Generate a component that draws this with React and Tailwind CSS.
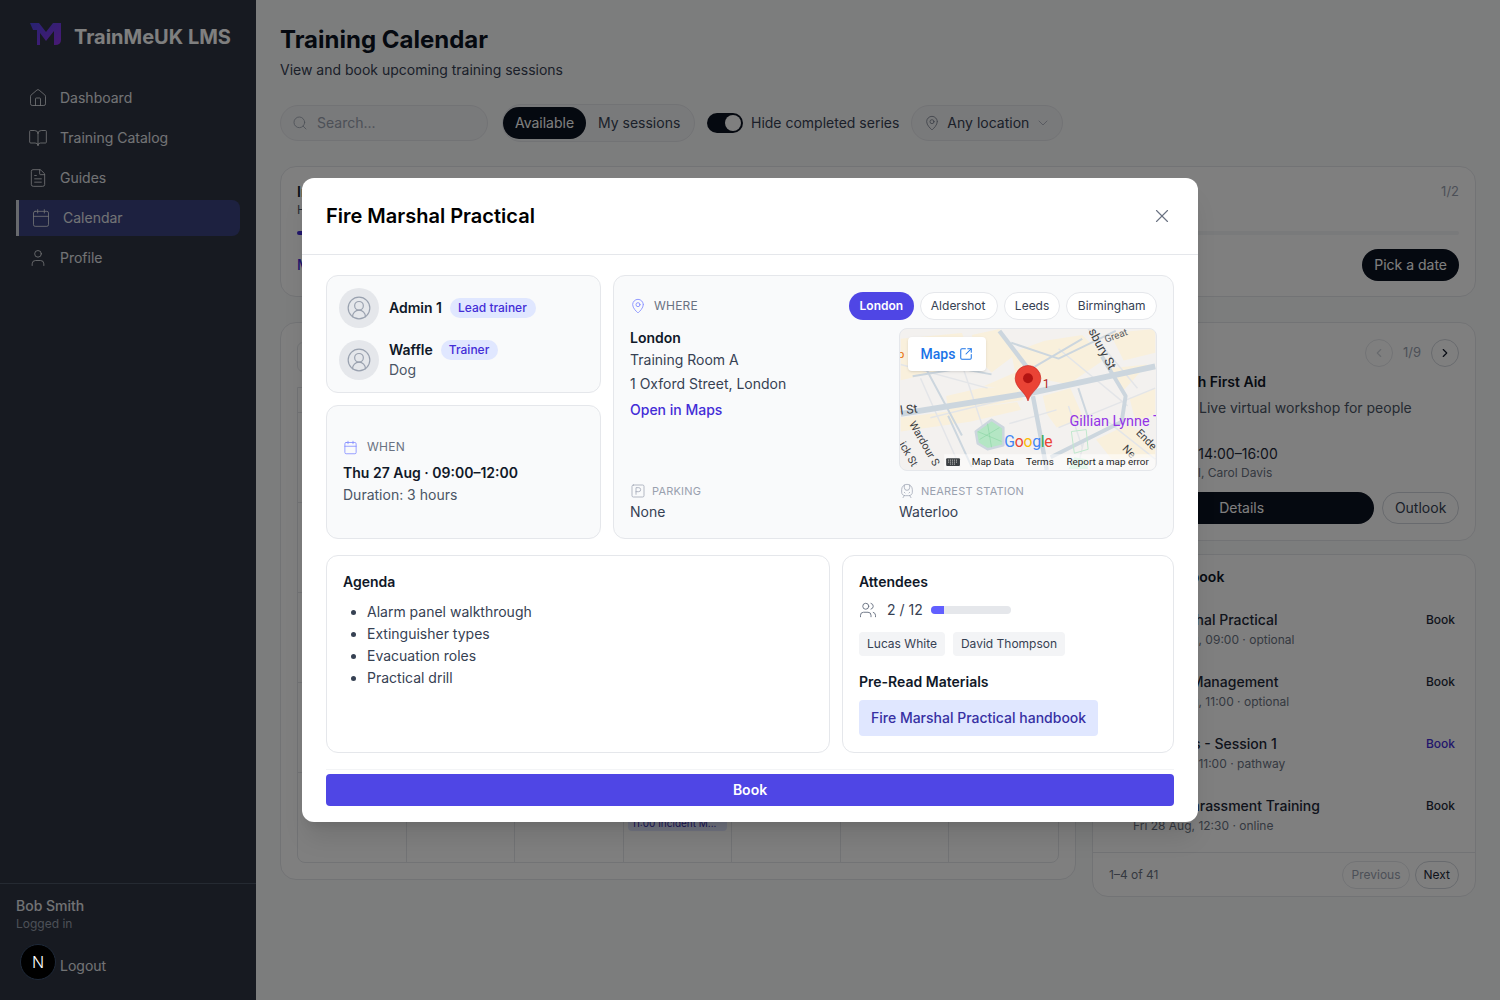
import { BookOpen, Calendar, ChevronDown, ChevronLeft, ChevronRight, CircleUserRound, FileText, House, MapPin, Search, SquareArrowOutUpRight, SquareParking, TrainFront, User, Users, X } from "lucide-react"

const navItems = [
    { label: "Dashboard", icon: House },
    { label: "Training Catalog", icon: BookOpen },
    { label: "Guides", icon: FileText },
    { label: "Calendar", icon: Calendar, active: true },
    { label: "Profile", icon: User },
]

const bookRows = [
    { title: "Fire Marshal Practical", sub: "Thu 27 Aug, 09:00 · optional" },
    { title: "Incident Management", sub: "Thu 27 Aug, 11:00 · optional" },
    { title: "Essentials - Session 1", sub: "Fri 28 Aug, 11:00 · pathway", purple: true },
    { title: "Sexual Harassment Training", sub: "Fri 28 Aug, 12:30 · online" },
]

function Sidebar() {
    return (
        <aside className="w-64 shrink-0 h-full bg-[#2e3442] flex flex-col">
            <div className="flex gap-3 pl-[30px] pt-[22px] h-[74px] items-start">
                <svg width="32" height="24" viewBox="0 0 32 24">
                    <defs>
                        <linearGradient id="logoM" x1="0" y1="0" x2="1" y2="1">
                            <stop offset="0" stopColor="#4f46e5" />
                            <stop offset="1" stopColor="#9333ea" />
                        </linearGradient>
                    </defs>
                    <path d="M0 1h9l7 9 7-9h8v17q0 5-6 5h-1V9l-8 10-6-8v12H7V8H3z" fill="url(#logoM)" />
                </svg>
                <span className="text-xl font-bold text-white leading-[30px]">TrainMeUK LMS</span>
            </div>
            <nav className="flex flex-col gap-1 px-4 mt-[6px] flex-1">
                {navItems.map((item) => {
                    const Icon = item.icon
                    return (
                        <div key={item.label} className={`h-9 flex items-center gap-3 pl-3 text-sm text-gray-200 rounded-r-lg ${item.active ? "bg-[#3a4280] border-l-[3px] border-gray-300" : ""}`}>
                            <Icon size={20} strokeWidth={1} />
                            {item.label}
                        </div>
                    )
                })}
            </nav>
            <div className="border-t border-gray-600 h-[117px] px-4 pt-3">
                <div className="text-sm font-medium text-gray-200">Bob Smith</div>
                <div className="text-xs text-gray-400 leading-4">Logged in</div>
                <div className="text-sm text-gray-200 pl-11 mt-[24px]">Logout</div>
            </div>
        </aside>
    )
}

function Toolbar() {
    return (
        <div className="flex items-center mt-6 h-[38px] text-sm">
            <div className="w-[208px] h-9 rounded-full border border-gray-200 bg-gray-100 flex items-center pl-[11px] gap-[9px] text-gray-400">
                <Search size={16} strokeWidth={1.25} />
                Search...
            </div>
            <div className="ml-[14px] h-[38px] w-[193px] rounded-full border border-gray-200 bg-gray-100 flex items-center text-gray-700">
                <span className="h-8 w-[83px] rounded-full bg-[#0b1220] text-white flex items-center justify-center">Available</span>
                <span className="pl-3">My sessions</span>
            </div>
            <div className="ml-3 w-9 h-5 rounded-full bg-[#0b1220] flex items-center justify-end p-0.5">
                <div className="w-4 h-4 rounded-full bg-white"></div>
            </div>
            <span className="ml-2 text-gray-700">Hide completed series</span>
            <div className="ml-3 w-[152px] h-9 rounded-full border border-gray-200 bg-gray-100 flex items-center pl-3 text-gray-700">
                <MapPin size={16} strokeWidth={1.1} className="text-gray-500" />
                <span className="ml-[7px]">Any location</span>
                <ChevronDown size={16} strokeWidth={1.1} className="ml-1.5 text-gray-400" />
            </div>
        </div>
    )
}

function CalendarCard() {
    const cells = Array.from({ length: 35 }, (_, i) => i)
    return (
        <div className="w-[796px] h-[558px] rounded-2xl border border-gray-200 bg-white px-4 pt-[19px]">
            <div className="w-20 h-[30px] rounded-md border border-gray-200 mb-[15px]"></div>
            <div className="border border-gray-200 rounded-b-lg grid grid-cols-7 pt-6">
                {cells.map((i) => (
                    <div key={i} className="h-[90px] border-t border-r border-gray-200 last:border-r-0 px-1 pt-[45px]">
                        {i === 31 && <div className="h-[13px] bg-indigo-100 rounded-sm text-[10px] leading-[11px] px-1 text-indigo-800 truncate">11:00 Incident M...</div>}
                    </div>
                ))}
            </div>
        </div>
    )
}

function NextCard() {
    return (
        <div className="h-[219px] rounded-2xl border border-gray-200 bg-white px-4 pt-4">
            <div className="flex items-center justify-end text-[13px] text-gray-400">
                <span className="w-7 h-7 rounded-full border border-gray-200 flex items-center justify-center text-gray-300"><ChevronLeft size={14} /></span>
                <span className="mx-[10px]">1/9</span>
                <span className="w-7 h-7 rounded-full border border-gray-300 flex items-center justify-center text-gray-900"><ChevronRight size={14} /></span>
            </div>
            <div className="text-sm font-semibold text-gray-900 mt-[5px] ml-[3px]">Mental Health First Aid</div>
            <div className="text-sm text-gray-600 mt-1.5 pl-[90px]">Live virtual workshop for people</div>
            <div className="text-sm text-gray-800 mt-[26px] leading-5">Thu 20 Aug · 14:00–16:00</div>
            <div className="text-xs text-gray-500 leading-4 mt-px">Trainers: Jo Hall, Carol Davis</div>
            <div className="flex gap-2 mt-[11px] text-sm">
                <span className="w-[266px] h-8 rounded-full bg-[#0b1220] text-white flex items-center justify-center">Details</span>
                <span className="w-[77px] h-8 rounded-full border border-gray-300 text-gray-700 flex items-center justify-center">Outlook</span>
            </div>
        </div>
    )
}

function BookCard() {
    return (
        <div className="h-[343px] mt-[13px] rounded-2xl border border-gray-200 bg-white flex flex-col">
            <div className="text-sm font-semibold text-gray-900 pl-4 pt-3">Sessions to book</div>
            <div className="flex-1 min-h-0 pt-[23px]">
                {bookRows.map((row) => (
                    <div key={row.title} className="h-[62px] pl-10 pr-5 flex justify-between">
                        <div>
                            <div className="text-sm font-medium text-gray-800 leading-5">{row.title}</div>
                            <div className="text-xs text-gray-500 leading-4 mt-0.5">{row.sub}</div>
                        </div>
                        <span className={`text-xs font-medium leading-5 ${row.purple ? "text-indigo-700" : "text-gray-800"}`}>Book</span>
                    </div>
                ))}
            </div>
            <div className="border-t border-gray-200 h-[44px] shrink-0 flex items-center justify-between px-4 text-xs">
                <span className="text-gray-500">1–4 of 41</span>
                <div className="flex gap-[5px]">
                    <span className="h-7 px-2 rounded-full border border-gray-200 text-gray-400 flex items-center">Previous</span>
                    <span className="h-7 px-2 rounded-full border border-gray-300 text-gray-800 flex items-center">Next</span>
                </div>
            </div>
        </div>
    )
}

function MapPreview() {
    return (
        <div className="relative h-[143px] rounded-lg border border-gray-200 overflow-hidden bg-[#f3f1ef]">
            <svg viewBox="0 0 258 143" className="w-full h-full block font-['Roboto']">
                <path d="M0 10 62 4 72 30 34 44 0 52zM72 6 100 0 116 26 92 44 78 30zM84 58 116 44 112 24 146 12 184 6 208 30 170 56 138 50 126 62zM46 68 80 60 118 58 124 72 48 84zM144 68 172 60 186 92 158 100 148 86zM212 4 258 0 258 24 226 32zM0 90 60 82 118 74 122 82 70 94 0 104zM232 70 258 60 258 86 238 94zM198 112 232 96 258 120 258 130 214 132zM210 40 250 36 226 62z" fill="#f9f0dc" />
                <g fill="none" stroke="#e3e5e8" strokeWidth="1.5">
                    <path d="M60 30 90 120M20 50 60 140M170 78 184 120M0 36 88 60M160 20 230 78M190 0 240 60M30 90 120 68M160 100 258 60M186 112 180 138M110 96 158 82M210 94 258 132" />
                </g>
                <g fill="none" stroke="#ccd6de" strokeLinejoin="round">
                    <path d="M0 86 131 65 258 38" strokeWidth="6" />
                    <path d="M134 68 142 110 148 143" strokeWidth="4.5" />
                    <path d="M100 2 132 44" strokeWidth="4.5" />
                    <path d="M204 28 228 68 224 94 152 130" strokeWidth="4" />
                    <path d="M112 14 160 30 218 2M12 48 60 40 92 46M20 30 62 108M126 44 184 10" strokeWidth="2" />
                    <path d="M180 60 190 90M48 88 72 140" strokeWidth="2" />
                </g>
                <path d="M76 104 92 92 104 100 104 118 88 122 78 116z" fill="#b4e6c4" stroke="#ccd6de" strokeWidth="2.5" strokeLinejoin="round" />
                <path d="M80 112 100 100M88 96 92 120M78 104 102 114" stroke="#7fd09c" strokeWidth="0.5" fill="none" />
                <path d="M173 104 188 102 190 122 176 126z" fill="none" stroke="#bfe8cc" strokeWidth="1" />
                <path d="M170 142 176 130 188 132 190 142z" fill="#c9efd4" />
                <g fontSize="11" fill="#3c4043">
                    <text x="0" y="87" fontSize="12.5" transform="rotate(-8 0 87)">l St</text>
                    <text x="8" y="96" transform="rotate(60 8 96)">Wardour S</text>
                    <text x="-2" y="117" transform="rotate(60 -2 117)">ick St</text>
                    <text x="190" y="2" fontSize="12.5" transform="rotate(62 190 2)">sbury St</text>
                    <text x="208" y="14" fontSize="10" fill="#5f6368" transform="rotate(-20 208 14)">Great</text>
                    <text x="238" y="106" transform="rotate(45 238 106)">Ende</text>
                    <text x="224" y="122" transform="rotate(45 224 122)">Ne</text>
                </g>
                <text x="-3" y="29" fontSize="12" fill="#e8710a">p</text>
                <text x="171" y="98" fontSize="14.6" fill="#9334e6">Gillian Lynne T</text>
                <text x="144" y="60" fontSize="12.5" fill="#b3261e">1</text>
                <text x="105" y="120" fontSize="16" letterSpacing="-0.3">
                    <tspan fill="#4285f4">G</tspan><tspan fill="#ea4335">o</tspan><tspan fill="#fbbc05">o</tspan><tspan fill="#4285f4">g</tspan><tspan fill="#34a853">l</tspan><tspan fill="#ea4335">e</tspan>
                </text>
                <rect x="44" y="127" width="214" height="16" fill="#ffffff" fillOpacity="0.55" />
                <rect x="46" y="131" width="14" height="8" rx="1" fill="#3c4043" />
                <path d="M48 133h10M48 135h10M50 137h6" stroke="#f3f1ef" strokeWidth="0.8" strokeDasharray="1 1" />
                <g fontSize="10" fill="#1f1f1f">
                    <text x="72" y="138">Map Data</text>
                    <text x="127" y="138">Terms</text>
                    <text x="168" y="138">Report a map error</text>
                </g>
                <path d="M129 73C126 63 116 60 116 50a13 13 0 0 1 26 0C142 60 132 63 129 73z" fill="#ea4335" stroke="#c5221f" strokeWidth="0.6" />
                <circle cx="129" cy="50" r="5" fill="#b31412" />
            </svg>
            <div className="absolute left-2 top-2 w-[78px] h-[34px] bg-white rounded-sm shadow-sm flex items-center justify-center gap-1 text-sm font-medium text-[#1a73e8] font-['Roboto']">
                Maps
                <SquareArrowOutUpRight size={14} strokeWidth={1.75} />
            </div>
        </div>
    )
}

function TrainersCard() {
    return (
        <div className="h-[118px] rounded-xl border border-gray-200 bg-[#f9fafb] p-3 flex flex-col gap-3">
            <div className="flex items-center gap-2.5">
                <div className="w-10 h-10 rounded-full bg-gray-200 flex items-center justify-center text-gray-400"><CircleUserRound size={26} strokeWidth={1.1} /></div>
                <span className="text-sm font-semibold text-gray-900">Admin 1</span>
                <span className="-ml-0.5 h-5 px-2 w-[86px] rounded-full bg-indigo-100 text-indigo-700 text-xs font-medium flex items-center">Lead trainer</span>
            </div>
            <div className="flex items-center gap-2.5">
                <div className="w-10 h-10 rounded-full bg-gray-200 flex items-center justify-center text-gray-400"><CircleUserRound size={26} strokeWidth={1.1} /></div>
                <div>
                    <div className="flex items-center gap-2">
                        <span className="text-sm font-semibold text-gray-900">Waffle</span>
                        <span className="h-5 px-2 w-[57px] rounded-full bg-indigo-100 text-indigo-700 text-xs font-medium flex items-center">Trainer</span>
                    </div>
                    <div className="text-sm text-gray-600 leading-5">Dog</div>
                </div>
            </div>
        </div>
    )
}

function WhenCard() {
    return (
        <div className="h-[134px] rounded-xl border border-gray-200 bg-[#f9fafb] px-4 flex flex-col justify-center">
            <div className="flex items-center gap-[9px] text-xs text-gray-500 leading-4 tracking-[0.3px]">
                <Calendar size={15} strokeWidth={1.25} className="text-indigo-400" />
                WHEN
            </div>
            <div className="text-sm font-semibold text-gray-900 mt-[8px] leading-5">Thu 27 Aug · 09:00–12:00</div>
            <div className="text-sm text-gray-600 mt-0.5 leading-5">Duration: 3 hours</div>
        </div>
    )
}

function WhereCard() {
    return (
        <div className="flex-1 h-[264px] rounded-xl border border-gray-200 bg-[#f9fafb] px-4 pt-4">
            <div className="flex items-center justify-between h-7">
                <div className="flex items-center gap-2 text-xs text-gray-500 tracking-[0.2px]">
                    <MapPin size={16} strokeWidth={1.25} className="text-indigo-400" />
                    WHERE
                </div>
                <div className="flex gap-1.5 text-xs">
                    <span className="h-7 w-[65px] rounded-full bg-[#4f46e5] text-white font-semibold flex items-center justify-center">London</span>
                    <span className="h-7 px-[10px] w-[78px] rounded-full border border-gray-200 bg-white text-gray-700 flex items-center">Aldershot</span>
                    <span className="h-7 px-[10px] rounded-full border border-gray-200 bg-white text-gray-700 flex items-center">Leeds</span>
                    <span className="h-7 px-[10.5px] rounded-full border border-gray-200 bg-white text-gray-700 flex items-center">Birmingham</span>
                </div>
            </div>
            <div className="grid grid-cols-[257px_258px] gap-x-3 mt-2">
                <div className="text-sm leading-5 text-gray-700">
                    <div className="font-semibold text-gray-900">London</div>
                    <div className="mt-0.5">Training Room A</div>
                    <div className="mt-1">1 Oxford Street, London</div>
                    <div className="mt-1.5 font-medium text-indigo-700">Open in Maps</div>
                </div>
                <MapPreview />
                <div className="mt-[12px]">
                    <div className="flex items-center gap-[6px] text-[11px] text-gray-400 leading-4 tracking-[0.2px]">
                        <SquareParking size={16} strokeWidth={1.1} />
                        PARKING
                    </div>
                    <div className="text-sm text-gray-700 mt-[3px] leading-5">None</div>
                </div>
                <div className="mt-[12px]">
                    <div className="flex items-center gap-[6px] text-[11px] text-gray-400 leading-4 tracking-[0.2px]">
                        <TrainFront size={16} strokeWidth={1.1} />
                        NEAREST STATION
                    </div>
                    <div className="text-sm text-gray-700 mt-[3px] leading-5">Waterloo</div>
                </div>
            </div>
        </div>
    )
}

function SessionModal() {
    return (
        <div className="w-[896px] h-[644px] bg-white rounded-xl shadow-xl flex flex-col">
            <div className="h-[77px] shrink-0 border-b border-gray-200 flex items-center justify-between pl-6 pr-[25px]">
                <h2 className="text-xl font-semibold text-black">Fire Marshal Practical</h2>
                <X size={22} strokeWidth={1.25} className="text-gray-500" />
            </div>
            <div className="px-6 pt-5 flex-1">
                <div className="flex gap-3">
                    <div className="w-[275px] flex flex-col gap-3">
                        <TrainersCard />
                        <WhenCard />
                    </div>
                    <WhereCard />
                </div>
                <div className="flex gap-3 mt-4 h-[198px]">
                    <div className="w-[504px] rounded-xl border border-gray-200 p-4">
                        <div className="text-sm font-semibold text-gray-900 leading-5">Agenda</div>
                        <ul className="list-disc pl-6 mt-[9px] text-sm text-gray-700 leading-[22px]">
                            <li>Alarm panel walkthrough</li>
                            <li>Extinguisher types</li>
                            <li>Evacuation roles</li>
                            <li>Practical drill</li>
                        </ul>
                    </div>
                    <div className="flex-1 rounded-xl border border-gray-200 p-4">
                        <div className="text-sm font-semibold text-gray-900 leading-5">Attendees</div>
                        <div className="flex items-center mt-[8px] h-5 text-sm text-gray-700">
                            <Users size={18} strokeWidth={1.25} className="text-gray-500" />
                            <span className="ml-[10px]">2 / 12</span>
                            <div className="ml-2 w-20 h-2 rounded-full bg-gray-200 overflow-hidden">
                                <div className="h-full bg-indigo-500" style={{ width: `${(2 / 12) * 100}%` }}></div>
                            </div>
                        </div>
                        <div className="flex gap-2 mt-[12px] text-xs text-gray-700">
                            <span className="h-6 px-2 rounded bg-gray-100 flex items-center">Lucas White</span>
                            <span className="h-6 px-2 rounded bg-gray-100 flex items-center">David Thompson</span>
                        </div>
                        <div className="text-sm font-semibold text-gray-900 leading-5 mt-4">Pre-Read Materials</div>
                        <div className="mt-2 w-fit h-9 px-3 rounded bg-[#e0e7ff] text-[#3730a3] text-sm font-medium flex items-center">Fire Marshal Practical handbook</div>
                    </div>
                </div>
            </div>
            <div className="mx-6 mb-4 pt-1 border-t border-gray-100">
                <div className="h-8 rounded bg-[#4f46e5] text-white text-sm font-semibold flex items-center justify-center">Book</div>
            </div>
        </div>
    )
}

export default function App() {
    return (
        <div className="relative w-full h-screen overflow-hidden flex bg-[#f9fafb] font-['Inter',sans-serif]">
            <Sidebar />
            <main className="flex-1 px-6 pt-6 min-w-0">
                <h1 className="text-2xl font-bold text-[#0b1220] leading-8">Training Calendar</h1>
                <p className="text-sm text-gray-700 mt-1 leading-5">View and book upcoming training sessions</p>
                <Toolbar />
                <div className="mt-6 h-[131px] rounded-2xl border border-gray-200 bg-white px-4 pt-[15px]">
                    <div className="flex justify-between items-start">
                        <div>
                            <div className="text-sm font-semibold text-gray-900 leading-5">Incident Management</div>
                            <div className="text-xs text-gray-600 leading-4">Half day pathway</div>
                        </div>
                        <span className="text-[13px] text-gray-400">1/2</span>
                    </div>
                    <div className="h-1 mt-[13px] bg-gray-100 rounded-full">
                        <div className="w-1/2 h-full bg-indigo-700 rounded-full"></div>
                    </div>
                    <div className="flex items-center justify-between mt-[14px]">
                        <span className="text-sm font-medium text-indigo-700">Manage</span>
                        <span className="h-8 px-3 rounded-full bg-[#0b1220] text-white text-sm flex items-center">Pick a date</span>
                    </div>
                </div>
                <div className="flex gap-4 mt-[25px]">
                    <CalendarCard />
                    <div className="w-[384px]">
                        <NextCard />
                        <BookCard />
                    </div>
                </div>
            </main>

            <div className="absolute inset-0 bg-black/50 flex items-center justify-center">
                <SessionModal />
            </div>

            <div className="absolute left-[20px] top-[944px] w-9 h-9 rounded-full bg-black border border-gray-800 flex items-center justify-center text-white text-base font-light">N</div>
        </div>
    )
}
